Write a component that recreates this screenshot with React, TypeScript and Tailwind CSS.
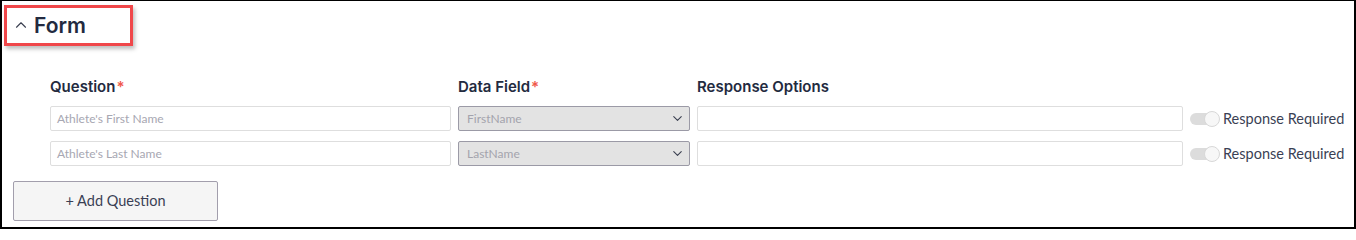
import { ChevronDown, ChevronUp } from 'lucide-react';

const rows = [
  { question: "Athlete's First Name", field: 'FirstName' },
  { question: "Athlete's Last Name", field: 'LastName' },
];

function Toggle() {
  return (
    <div className="relative flex h-[16px] w-[30px] items-center">
      <div className="h-[12px] w-[28px] rounded-full bg-[#dcdcdc]" />
      <div className="absolute right-0 top-0 h-[16px] w-[16px] rounded-full border border-[#d8d8d8] bg-[#f7f7f7]" />
    </div>
  );
}

export default function App() {
  return (
    <div
      className="flex h-[229px] w-[1356px] flex-col border-t border-b-2 border-l-2 border-r-2 border-black bg-white text-[#232a40]"
      style={{ fontFamily: 'Lato, "Open Sans", sans-serif' }}
    >
      {/* Header */}
      <div className="ml-[2px] mt-[4px] flex h-[41px] w-[129px] items-center gap-[4px] border-[3px] border-[#f0474a] pl-[5px] shadow-[2px_3px_4px_rgba(0,0,0,0.25)]">
        <ChevronUp className="mb-[2px] h-[18px] w-[18px] text-[#3a3f50]" strokeWidth={1.5} />
        <span className="text-[21px] leading-none" style={{ fontFamily: 'Inter, Lato, sans-serif', fontWeight: 600 }}>
          Form
        </span>
      </div>

      {/* Column labels */}
      <div
        className="mt-[33px] flex pl-[48px] text-[15px] font-semibold leading-none"
        style={{ fontFamily: 'Inter, Lato, sans-serif' }}
      >
        <div className="w-[408px]">
          Question<span className="ml-[1px] text-[#f0584a]">*</span>
        </div>
        <div className="w-[239px]">
          Data Field<span className="ml-[1px] text-[#f0584a]">*</span>
        </div>
        <div>Response Options</div>
      </div>

      {/* Rows */}
      <div className="mt-[12px] flex flex-col gap-[10px] pl-[48px]">
        {rows.map((r) => (
          <div key={r.field} className="flex items-center">
            <div className="flex h-[25px] w-[401px] items-center rounded-[2px] border border-[#dedede] px-[6px] text-[12px] text-[#a7a7b2]">
              {r.question}
            </div>
            <div className="ml-[7px] flex h-[25px] w-[232px] items-center justify-between rounded-[2px] border border-[#9b9aa6] bg-[#e3e3e3] pl-[8px] pr-[4px] text-[12px] text-[#a3a3ad]">
              {r.field}
              <ChevronDown className="h-[15px] w-[15px] text-[#3a3f50]" strokeWidth={1.75} />
            </div>
            <div className="ml-[7px] h-[25px] w-[486px] rounded-[2px] border border-[#dedede]" />
            <div className="ml-[7px] flex items-center gap-[3px]">
              <Toggle />
              <span className="text-[14.5px] text-[#3a3f54]">Response Required</span>
            </div>
          </div>
        ))}
      </div>

      {/* Add */}
      <div className="ml-[11px] mt-[15px] flex h-[40px] w-[205px] items-center justify-center rounded-[2px] border border-[#a29eac] bg-[#f5f5f5] text-[14.5px] text-[#3a3f54]">
        + Add Question
      </div>
    </div>
  );
}
